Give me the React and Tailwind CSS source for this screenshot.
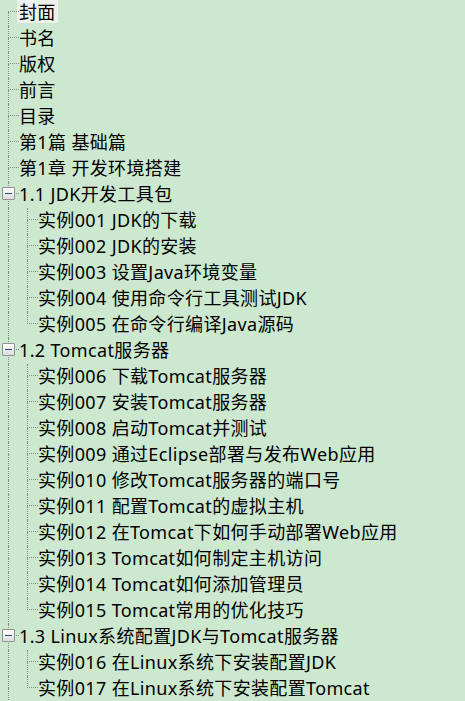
import React from "react";

const TREE = [
  { label: "封面", selected: true },
  { label: "书名" },
  { label: "版权" },
  { label: "前言" },
  { label: "目录" },
  { label: "第1篇 基础篇" },
  { label: "第1章 开发环境搭建" },
  {
    label: "1.1 JDK开发工具包",
    children: [
      "实例001 JDK的下载",
      "实例002 JDK的安装",
      "实例003 设置Java环境变量",
      "实例004 使用命令行工具测试JDK",
      "实例005 在命令行编译Java源码",
    ],
  },
  {
    label: "1.2 Tomcat服务器",
    children: [
      "实例006 下载Tomcat服务器",
      "实例007 安装Tomcat服务器",
      "实例008 启动Tomcat并测试",
      "实例009 通过Eclipse部署与发布Web应用",
      "实例010 修改Tomcat服务器的端口号",
      "实例011 配置Tomcat的虚拟主机",
      "实例012 在Tomcat下如何手动部署Web应用",
      "实例013 Tomcat如何制定主机访问",
      "实例014 Tomcat如何添加管理员",
      "实例015 Tomcat常用的优化技巧",
    ],
  },
  {
    label: "1.3 Linux系统配置JDK与Tomcat服务器",
    children: ["实例016 在Linux系统下安装配置JDK", "实例017 在Linux系统下安装配置Tomcat"],
  },
];

// one indent column: vertical line at x=8, optional elbow to the right
const Guide = ({ first, last, elbow, box }) => (
  <div className="relative flex h-full w-[19px] shrink-0 flex-col">
    <div
      className={`ml-[8px] h-[12px] border-dotted border-[#8a8a8a] ${first ? "" : "border-l"} ${
        elbow ? "w-[11px] border-b" : "w-0"
      }`}
    />
    <div className={`ml-[8px] h-[14px] border-dotted border-[#8a8a8a] ${last ? "" : "border-l"}`} />
    {box && (
      <div className="absolute left-[2px] top-[5px] flex h-[13px] w-[13px] items-center justify-center rounded-[1px] border border-[#919191] bg-gradient-to-b from-white to-[#dcdcdc]">
        <div className="h-[1px] w-[7px] bg-[#2f4a7a]" />
      </div>
    )}
  </div>
);

const Label = ({ children, selected }) => (
  <span
    className={`ml-[-2px] flex h-[23px] items-center self-start px-[2px] leading-none whitespace-nowrap ${
      selected ? "bg-[#eff1ef]" : ""
    }`}
  >
    {children}
  </span>
);

export default function App() {
  const rows = [];
  TREE.forEach((node, i) => {
    rows.push(
      <div key={node.label} className="flex h-[26px] items-center">
        <Guide first={i === 0} elbow box={!!node.children} />
        <Label selected={node.selected}>{node.label}</Label>
      </div>
    );
    (node.children || []).forEach((c, j, arr) => (
      rows.push(
        <div key={c} className="flex h-[26px] items-center">
          <Guide />
          <Guide elbow last={j === arr.length - 1} />
          <Label>{c}</Label>
        </div>
      )
    ));
  });

  return (
    <div
      className="h-[701px] w-[465px] overflow-hidden bg-[#cce8cf] text-[18px] tracking-[0.35px] text-black"
      style={{ fontFamily: '"Noto Sans", "Noto Sans CJK SC", sans-serif' }}
    >
      {rows}
      <div className="flex h-[26px]">
        <Guide />
      </div>
    </div>
  );
}
